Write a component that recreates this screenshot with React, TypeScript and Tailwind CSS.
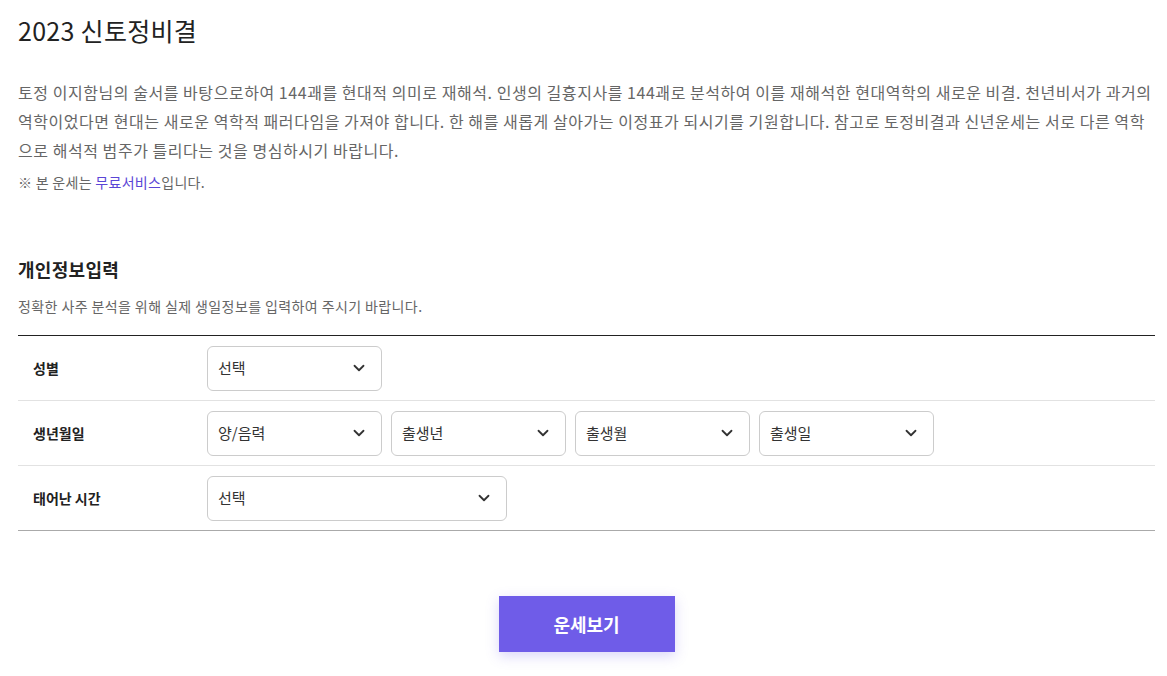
import { ChevronDown } from 'lucide-react'

type SelectProps = {
  label: string
  width: string
}

function Select({ label, width }: SelectProps) {
  return (
    <div
      className={`flex h-[45px] ${width} items-center justify-between rounded-[6px] border border-[#cccccc] bg-white pl-[10px] pr-[13px] text-[15px] text-[#333333]`}
    >
      <span>{label}</span>
      <ChevronDown className="h-[18px] w-[18px] text-[#333333]" strokeWidth={2.4} />
    </div>
  )
}

type RowProps = {
  label: string
  last?: boolean
  children: React.ReactNode
}

function FormRow({ label, last, children }: RowProps) {
  return (
    <div
      className={`flex h-[65px] items-center ${last ? 'border-b border-[#aaaaaa]' : 'border-b border-[#e2e2e2]'}`}
    >
      <div className="w-[189px] pl-[15px] text-[14px] font-bold text-[#222222]">{label}</div>
      <div className="flex gap-[9px]">{children}</div>
    </div>
  )
}

const intro = [
  '토정 이지함님의 술서를 바탕으로하여 144괘를 현대적 의미로 재해석. 인생의 길흉지사를 144괘로 분석하여 이를 재해석한 현대역학의 새로운 비결. 천년비서가 과거의',
  '역학이었다면 현대는 새로운 역학적 패러다임을 가져야 합니다. 한 해를 새롭게 살아가는 이정표가 되시기를 기원합니다. 참고로 토정비결과 신년운세는 서로 다른 역학',
  '으로 해석적 범주가 틀리다는 것을 명심하시기 바랍니다.',
]

export default function App() {
  return (
    <div className="min-h-screen bg-white pl-[18px] pr-[12px] font-['Noto_Sans_CJK_KR','Noto_Sans',sans-serif]">
      <h1 className="pt-[12px] text-[25px] leading-[36px] tracking-[0.3px] text-[#222222]">2023 신토정비결</h1>

      <p className="mt-[30px] text-[16px] leading-[29px] tracking-[0.55px] text-[#666666]">
        {intro.map((line) => (
          <span key={line} className="block whitespace-nowrap">
            {line}
          </span>
        ))}
      </p>
      <p className="mt-[7px] text-[14px] leading-[20px] tracking-[0.3px] text-[#666666]">
        ※ 본 운세는 <span className="text-[#5a45d6]">무료서비스</span>입니다.
      </p>

      <h2 className="mt-[65px] text-[18px] font-bold leading-[24px] tracking-[0.3px] text-[#222222]">개인정보입력</h2>
      <p className="mt-[15px] text-[14px] leading-[20px] tracking-[0.4px] text-[#666666]">
        정확한 사주 분석을 위해 실제 생일정보를 입력하여 주시기 바랍니다.
      </p>

      <div className="mt-[19px] border-t border-[#222222]">
        <FormRow label="성별">
          <Select label="선택" width="w-[175px]" />
        </FormRow>
        <FormRow label="생년월일">
          <Select label="양/음력" width="w-[175px]" />
          <Select label="출생년" width="w-[175px]" />
          <Select label="출생월" width="w-[175px]" />
          <Select label="출생일" width="w-[175px]" />
        </FormRow>
        <FormRow label="태어난 시간" last>
          <Select label="선택" width="w-[300px]" />
        </FormRow>
      </div>

      <div className="mt-[65px] flex justify-center">
        <button
          type="button"
          className="h-[56px] w-[176px] bg-[#6f5ce8] text-[18px] font-bold text-white shadow-[0_4px_12px_rgba(111,92,232,0.25)]"
        >
          운세보기
        </button>
      </div>
    </div>
  )
}
